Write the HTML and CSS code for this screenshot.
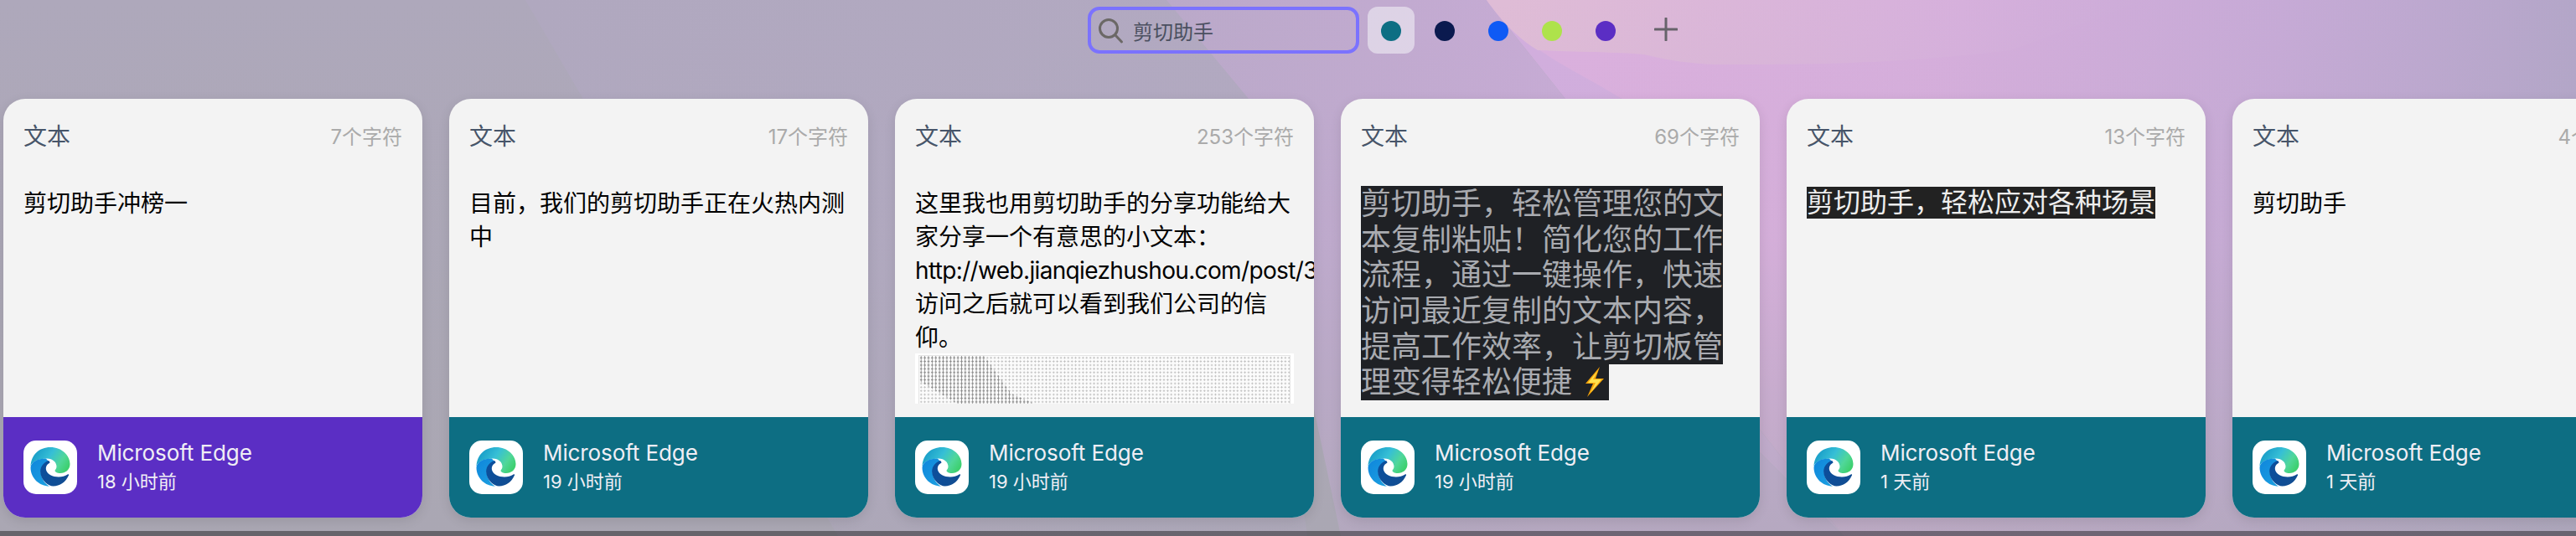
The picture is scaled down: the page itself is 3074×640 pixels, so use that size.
FILE: index.html
```html
<!DOCTYPE html>
<html lang="zh-CN">
<head>
<meta charset="utf-8">
<title>剪切助手</title>
<link rel="stylesheet" href="styles.css">
</head>
<body>
<svg class="wallpaper" width="3074" height="640" viewBox="0 0 3074 640" aria-hidden="true">
  <defs>
    <linearGradient id="base" x1="0" y1="0" x2="0" y2="1"><stop offset="0" stop-color="#aea8bb"/><stop offset="1" stop-color="#aaa7b3"/></linearGradient>
    <linearGradient id="lilac" x1="0" y1="0" x2="1" y2="0"><stop offset="0" stop-color="#b0a8bf"/><stop offset="1" stop-color="#b2a9c1"/></linearGradient>
    <linearGradient id="mid" gradientUnits="userSpaceOnUse" x1="1392" y1="0" x2="1900" y2="60"><stop offset="0" stop-color="#baa9c9"/><stop offset="1" stop-color="#c8abd6"/></linearGradient>
    <linearGradient id="pink" gradientUnits="userSpaceOnUse" x1="1900" y1="60" x2="3074" y2="120"><stop offset="0" stop-color="#dbb0de"/><stop offset="0.35" stop-color="#d6aedc"/><stop offset="0.7" stop-color="#c6aad6"/><stop offset="1" stop-color="#b3a6c8"/></linearGradient>
    <linearGradient id="pale" gradientUnits="userSpaceOnUse" x1="1800" y1="0" x2="2700" y2="60"><stop offset="0" stop-color="#dfbcd6"/><stop offset="0.6" stop-color="#d6b0dc"/><stop offset="1" stop-color="#c6aad6" stop-opacity="0"/></linearGradient>
    <linearGradient id="fade" x1="0" y1="0" x2="0" y2="1"><stop offset="0" stop-color="#aaa7b3" stop-opacity="0"/><stop offset="0.45" stop-color="#aaa7b3" stop-opacity="0.1"/><stop offset="1" stop-color="#aaa7b3" stop-opacity="0.62"/></linearGradient>
  </defs>
  <rect width="3074" height="640" fill="url(#base)"/>
  <polygon points="627,0 1392,0 1490,118 1560,640 1000,640" fill="url(#lilac)"/>
  <polygon points="1392,0 1774,0 1868,118 2060,500 2200,640 1600,640 1490,118" fill="url(#mid)"/>
  <polygon points="1774,0 1935,118 2090,500 2200,640 2060,500 1868,118" fill="#d2aede"/>
  <path d="M1774 0 C1795 30 1810 42 1828 53 C1860 78 1900 95 1935 118 L2090 500 L2200 640 L3074 640 L3074 0 Z" fill="url(#pink)"/>
  <path d="M1774 0 C1795 30 1815 48 1835 60 C1880 62 1930 62 1962 65 C1990 72 2020 77 2060 77 C2150 77 2260 77 2400 60 L2560 0 Z" fill="url(#pale)"/>
  <rect width="3074" height="640" fill="url(#fade)"/>
</svg>

<header class="toolbar">
  <div class="search">
    <svg class="search-icon" width="32" height="32" viewBox="0 0 32 32"><ellipse cx="13" cy="13" rx="10.5" ry="10.5" fill="none" stroke="#6b6866" stroke-width="3"/><path d="M21 21l7.5 8" fill="none" stroke="#6b6866" stroke-width="3" stroke-linecap="round"/></svg>
    <span class="search-text">剪切助手</span>
  </div>
  <div class="swatches">
    <div class="swatch swatch-active"><i class="dot dot-teal"></i></div>
    <div class="swatch"><i class="dot dot-navy"></i></div>
    <div class="swatch"><i class="dot dot-blue"></i></div>
    <div class="swatch"><i class="dot dot-lime"></i></div>
    <div class="swatch"><i class="dot dot-purple"></i></div>
    <div class="swatch swatch-add"><svg width="28" height="28" viewBox="0 0 28 28"><path d="M14 1v26M1 14h26" stroke="#66636a" stroke-width="3" stroke-linecap="round" fill="none"/></svg></div>
  </div>
</header>

<svg class="defs-only" width="0" height="0" aria-hidden="true">
  <defs>
    <linearGradient id="edgeTop" x1="0.05" y1="0.35" x2="0.95" y2="0.75"><stop offset="0" stop-color="#1a9fc9"/><stop offset="0.4" stop-color="#36bfd6"/><stop offset="0.75" stop-color="#50d79a"/><stop offset="1" stop-color="#3ed070"/></linearGradient>
    <linearGradient id="edgeLeft" x1="0" y1="0" x2="0.8" y2="1"><stop offset="0" stop-color="#0f86dc"/><stop offset="1" stop-color="#1b9ee0"/></linearGradient>
    <linearGradient id="edgeDark" x1="0" y1="0" x2="1" y2="0.6"><stop offset="0" stop-color="#0b4f9e"/><stop offset="1" stop-color="#114d92"/></linearGradient>
    <symbol id="edge" viewBox="0 0 64 64">
      <rect width="64" height="64" rx="15" fill="#fff"/>
      <path d="M8.5 31C9 17 19 8 32 8c14 0 23.5 10 23.5 20 0 7-5.500 11-11.500 11-4 0-6.500-1.500-6.500-3 0-1 2-2 2-5 0-5-4.500-9.500-11.500-9.500C18 21.500 10 25 8.500 31z" fill="url(#edgeTop)"/>
      <path d="M8.500 32C8.500 45 19 54.500 31 54.500c-5-2.500-9-8.500-10-14-1-6 2-11.500 9-14.500-1-3-3-4.500-4-4.500C17 21.500 9.500 25 8.500 32z" fill="url(#edgeLeft)"/>
      <path d="M30 24c-7 2.500-11 8.500-9.500 16 1.500 8 9 14.500 15 14.500 8 0 15-5 18.500-13 .4-1-.6-1.500-1.300-1-3 2-6.700 3-10.700 3-7 0-14-3.500-15-8.500-.8-4 1.500-7 4.500-8.500-.2-1-.5-2-1.500-2.500z" fill="url(#edgeDark)"/>
    </symbol>
  </defs>
</svg>

<main class="cards">
  <article class="card">
    <div class="card-head"><span class="kind">文本</span><span class="count">7个字符</span></div>
    <div class="card-body">剪切助手冲榜一</div>
    <footer class="card-foot foot-purple">
      <svg class="app-icon" width="64" height="64"><use href="#edge"/></svg>
      <div class="app-meta"><div class="app-name">Microsoft Edge</div><div class="app-time">18 小时前</div></div>
    </footer>
  </article>

  <article class="card">
    <div class="card-head"><span class="kind">文本</span><span class="count">17个字符</span></div>
    <div class="card-body">目前，我们的剪切助手正在火热内测中</div>
    <footer class="card-foot foot-teal">
      <svg class="app-icon" width="64" height="64"><use href="#edge"/></svg>
      <div class="app-meta"><div class="app-name">Microsoft Edge</div><div class="app-time">19 小时前</div></div>
    </footer>
  </article>

  <article class="card">
    <div class="card-head"><span class="kind">文本</span><span class="count">253个字符</span></div>
    <div class="card-body">这里我也用剪切助手的分享功能给大家分享一个有意思的小文本：<span class="url">http://web.jianqiezhushou.com/post/3</span>访问之后就可以看到我们公司的信仰。
      <div class="thumb"><div class="thumb-frame"><div class="thumb-dark"></div></div></div>
    </div>
    <footer class="card-foot foot-teal">
      <svg class="app-icon" width="64" height="64"><use href="#edge"/></svg>
      <div class="app-meta"><div class="app-name">Microsoft Edge</div><div class="app-time">19 小时前</div></div>
    </footer>
  </article>

  <article class="card">
    <div class="card-head"><span class="kind">文本</span><span class="count">69个字符</span></div>
    <div class="card-body">
      <div class="dark-line">剪切助手，轻松管理您的文</div>
      <div class="dark-line">本复制粘贴！简化您的工作</div>
      <div class="dark-line">流程，通过一键操作，快速</div>
      <div class="dark-line">访问最近复制的文本内容，</div>
      <div class="dark-line">提高工作效率，让剪切板管</div>
      <div class="dark-line">理变得轻松便捷 <svg class="bolt" width="36" height="36" viewBox="0 0 36 36"><path d="M25 0L8 20h9L10 36l20-22h-10z" fill="#f7a40a"/><path d="M23 4L11 19h9L14 31l13-16h-10z" fill="#ffe14d"/></svg></div>
    </div>
    <footer class="card-foot foot-teal">
      <svg class="app-icon" width="64" height="64"><use href="#edge"/></svg>
      <div class="app-meta"><div class="app-name">Microsoft Edge</div><div class="app-time">19 小时前</div></div>
    </footer>
  </article>

  <article class="card">
    <div class="card-head"><span class="kind">文本</span><span class="count">13个字符</span></div>
    <div class="card-body"><div class="black-line">剪切助手，轻松应对各种场景</div></div>
    <footer class="card-foot foot-teal">
      <svg class="app-icon" width="64" height="64"><use href="#edge"/></svg>
      <div class="app-meta"><div class="app-name">Microsoft Edge</div><div class="app-time">1 天前</div></div>
    </footer>
  </article>

  <article class="card">
    <div class="card-head"><span class="kind">文本</span><span class="count">4个字符</span></div>
    <div class="card-body">剪切助手</div>
    <footer class="card-foot foot-teal">
      <svg class="app-icon" width="64" height="64"><use href="#edge"/></svg>
      <div class="app-meta"><div class="app-name">Microsoft Edge</div><div class="app-time">1 天前</div></div>
    </footer>
  </article>
</main>
<div class="dock-edge"></div>
</body>
</html>
```

FILE: styles.css
```css
* { box-sizing: border-box; }
html, body { margin: 0; padding: 0; }
body {
  position: relative;
  width: 3074px;
  height: 640px;
  overflow: hidden;
  display: flex;
  flex-direction: column;
  font-family: Inter, "Noto Sans CJK SC", "Noto Sans", sans-serif;
  color: #000;
}
.wallpaper { position: absolute; left: 0; top: 0; }
.defs-only { position: absolute; }

.toolbar {
  position: relative;
  display: flex;
  align-items: center;
  gap: 10px;
  height: 56px;
  margin-top: 8px;
  padding-left: 1298px;
}
.search {
  display: flex;
  align-items: center;
  gap: 10px;
  width: 324px;
  height: 56px;
  padding-left: 8px;
  border: 4px solid #7b72ff;
  border-radius: 14px;
}
.search-icon { flex: none; margin-top: 2px; }
.search-text { font-size: 24px; color: #4b5060; }
.swatches { display: flex; gap: 8px; }
.swatch {
  display: flex;
  align-items: center;
  justify-content: center;
  width: 56px;
  height: 56px;
  border-radius: 12px;
}
.swatch-active { background: rgba(240, 238, 245, 0.6); }
.swatch-add { margin-left: 8px; padding-bottom: 2px; }
.dot { display: block; width: 24px; height: 24px; border-radius: 50%; margin-top: 2px; }
.dot-teal { background: #0d6e83; }
.dot-navy { background: #0b1a4f; }
.dot-blue { background: #0f5af5; }
.dot-lime { background: #aee24b; }
.dot-purple { background: #5b2ec4; }

.cards {
  position: relative;
  display: flex;
  gap: 32px;
  margin-top: 54px;
  padding-left: 4px;
}
.card {
  flex: none;
  display: flex;
  flex-direction: column;
  width: 500px;
  height: 500px;
  border-radius: 26px;
  overflow: hidden;
  background: #f3f3f3;
  box-shadow: 0 4px 14px rgba(0, 0, 0, 0.1);
}
.card-head {
  display: flex;
  justify-content: space-between;
  align-items: center;
  height: 40px;
  margin: 23px 24px 41px;
}
.kind { font-size: 28px; color: #475569; }
.count { font-size: 24px; color: #aaa; }
.card-body {
  flex: none;
  height: 260px;
  width: 452px;
  margin: 0 24px;
  padding-top: 1px;
  font-size: 28px;
  line-height: 40px;
  overflow-x: visible;
  overflow-y: clip;
}
.url { white-space: nowrap; letter-spacing: -0.65px; }
.thumb {
  height: 90px;
  margin-top: -1px;
  padding: 2px 4px;
  background: #fff;
}
.thumb-frame {
  position: relative;
  height: 100%;
  border: 1px solid #e4e4e4;
  background-color: #fbfbfb;
  background-image: radial-gradient(circle, #c2c2c2 0.9px, transparent 1.1px);
  background-size: 4.4px 4.4px;
}
.thumb-dark {
  position: absolute;
  inset: 0;
  background-image: radial-gradient(ellipse 1px 2px, #777 0 90%, transparent 100%);
  background-size: 4.4px 4.4px;
  opacity: 0.7;
  clip-path: polygon(0 0, 78px 0, 82px 6px, 110px 45px, 145px 60px, 50px 60px, 0 30px);
}
.dark-line {
  width: fit-content;
  height: 42.67px;
  font-size: 36px;
  line-height: 42.67px;
  white-space: nowrap;
  background: #1f2125;
  color: #a9abb0;
}
.dark-line:first-child { margin-top: -1px; }
.bolt { vertical-align: -5px; margin-left: -2px; }
.black-line {
  width: fit-content;
  font-size: 32px;
  line-height: 38px;
  white-space: nowrap;
  background: #222;
  color: #eee;
}
.card-foot {
  flex: none;
  display: flex;
  align-items: center;
  gap: 24px;
  height: 120px;
  margin-top: auto;
  padding-left: 24px;
  color: #f0eef5;
}
.foot-purple { background: #5b2ec4; }
.foot-teal { background: #0d6e83; }
.app-icon { flex: none; }
.app-meta { display: flex; flex-direction: column; }
.app-name { font-size: 26px; line-height: 34px; letter-spacing: -0.1px; }
.app-time { font-size: 22px; line-height: 34px; }

.dock-edge {
  position: absolute;
  left: 0;
  right: 0;
  bottom: 0;
  height: 6px;
  background: rgba(0, 0, 0, 0.4);
}
```
